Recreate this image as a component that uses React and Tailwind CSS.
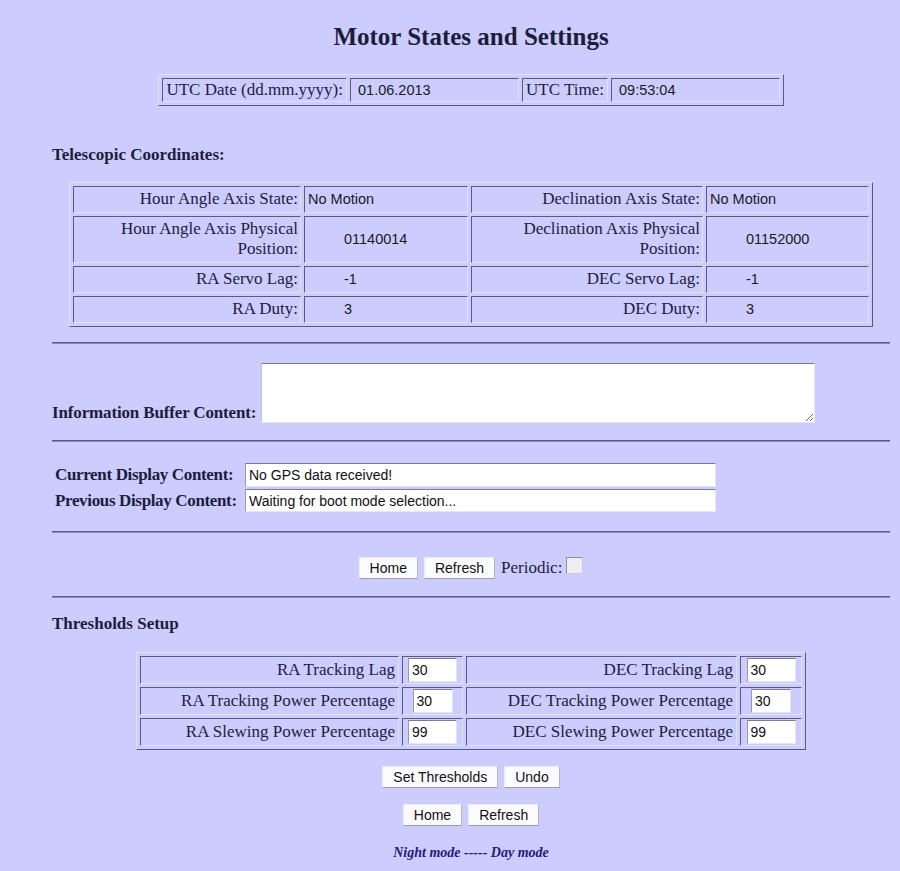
const CELL =
  "border border-t-[#5a5a7e] border-l-[#5a5a7e] border-b-[#e2e2fa] border-r-[#e2e2fa]";
const OUTER =
  "table-fixed border-separate border-spacing-[3px] border border-t-[#e2e2fa] border-l-[#e2e2fa] border-b-[#5a5a7e] border-r-[#5a5a7e]";
const SANS = "font-['Liberation_Sans',Arial,sans-serif] text-[14.5px] text-[#1a1a1a]";
const INPUT =
  "bg-white border border-t-[#7a7a90] border-l-[#9a9aae] border-b-[#e6e6ee] border-r-[#e6e6ee] font-['Liberation_Sans',Arial,sans-serif] text-[14px] text-[#111] pl-[3px] outline-none";

function Btn({ children }) {
  return (
    <button className="h-[22px] px-[10px] bg-[#fbfbfd] border border-t-[#ececf4] border-l-[#ececf4] border-b-[#9c9cb4] border-r-[#b4b4c8] font-['Liberation_Sans',Arial,sans-serif] text-[14px] leading-[20px] text-[#111]">
      {children}
    </button>
  );
}

function Hr() {
  return <div className="h-[2px] border-t border-t-[#5c5c80] border-b border-b-[#8c8cae]" />;
}

const coordRows = [
  { l1: ["Hour Angle Axis State:"], v1: "No Motion", l2: ["Declination Axis State:"], v2: "No Motion", plain: true },
  { l1: ["Hour Angle Axis Physical", "Position:"], v1: "01140014", l2: ["Declination Axis Physical", "Position:"], v2: "01152000" },
  { l1: ["RA Servo Lag:"], v1: "-1", l2: ["DEC Servo Lag:"], v2: "-1" },
  { l1: ["RA Duty:"], v1: "3", l2: ["DEC Duty:"], v2: "3" },
];

const thrRows = [
  { l1: "RA Tracking Lag", v1: "30", l2: "DEC Tracking Lag", v2: "30", narrow: false },
  { l1: "RA Tracking Power Percentage", v1: "30", l2: "DEC Tracking Power Percentage", v2: "30", narrow: true },
  { l1: "RA Slewing Power Percentage", v1: "99", l2: "DEC Slewing Power Percentage", v2: "99", narrow: false },
];

function Label({ lines }) {
  return lines.map((t, i) => (
    <span key={i}>
      {i > 0 && <br />}
      {t}
    </span>
  ));
}

export default function App() {
  return (
    <div className="min-h-[871px] bg-[#ccccff] text-[#1d1d3b] font-['Liberation_Serif','Times_New_Roman',serif] pl-[52px] pr-[10px] pb-[20px]">
      <div className="flex flex-col">
        <h1 className="mt-[22px] text-center text-[25px] leading-[29px] font-bold">Motor States and Settings</h1>

        <div className="mt-[23px] flex justify-center">
          <table className={`${OUTER} w-[626px]`}>
            <tbody>
              <tr>
                <td className={`${CELL} w-[185px] text-right pr-[3px] py-[1px] text-[17px] leading-[20px]`}>UTC Date (dd.mm.yyyy):</td>
                <td className={`${CELL} ${SANS} w-[169px] pl-[7px] py-[1px] leading-[20px]`}>01.06.2013</td>
                <td className={`${CELL} w-[86px] text-right pr-[3px] py-[1px] text-[17px] leading-[20px]`}>UTC Time:</td>
                <td className={`${CELL} ${SANS} w-[169px] pl-[7px] py-[1px] leading-[20px]`}>09:53:04</td>
              </tr>
            </tbody>
          </table>
        </div>

        <div className="mt-[39px] text-[17px] leading-[20px] font-bold">Telescopic Coordinates:</div>

        <div className="mt-[17px] pl-[17px]">
          <table className={`${OUTER} w-[804px]`}>
            <tbody>
              {coordRows.map((r, i) => (
                <tr key={i}>
                  <td className={`${CELL} w-[228px] text-right pr-[2px] pt-[2px] pb-[3px] text-[17px] leading-[20px]`}>
                    <Label lines={r.l1} />
                  </td>
                  <td className={`${CELL} ${SANS} w-[164px] ${r.plain ? "pl-[3px]" : "pl-[39px]"} pt-[2px] pb-[3px] leading-[20px]`}>{r.v1}</td>
                  <td className={`${CELL} w-[232px] text-right pr-[2px] pt-[2px] pb-[3px] text-[17px] leading-[20px]`}>
                    <Label lines={r.l2} />
                  </td>
                  <td className={`${CELL} ${SANS} w-[163px] ${r.plain ? "pl-[3px]" : "pl-[39px]"} pt-[2px] pb-[3px] leading-[20px]`}>{r.v2}</td>
                </tr>
              ))}
            </tbody>
          </table>
        </div>

        <div className="mt-[15px]"><Hr /></div>

        <div className="mt-[19px] flex items-end gap-[5px]">
          <span className="text-[17px] leading-[20px] font-bold tracking-[-0.15px] whitespace-nowrap">Information Buffer Content:</span>
          <textarea
            className="w-[554px] h-[60px] bg-white border border-t-[#7a7a90] border-l-[#c4c4d4] border-b-[#e6e6ee] border-r-[#e6e6ee] outline-none block"
            defaultValue=""
          />
        </div>

        <div className="mt-[17px]"><Hr /></div>

        <div className="mt-[21px] pl-[3px] grid grid-cols-[190px_471px] gap-y-[2px] items-center">
          <span className="text-[17px] leading-[20px] font-bold tracking-[-0.35px] whitespace-nowrap">Current Display Content:</span>
          <input className={`${INPUT} w-[471px] h-[24px]`} defaultValue="No GPS data received!" />
          <span className="text-[17px] leading-[20px] font-bold tracking-[-0.35px] whitespace-nowrap">Previous Display Content:</span>
          <input className={`${INPUT} w-[471px] h-[23px]`} defaultValue="Waiting for boot mode selection..." />
        </div>

        <div className="mt-[19px]"><Hr /></div>

        <div className="mt-[23px] h-[23px] flex justify-center items-center gap-[6px]">
          <Btn>Home</Btn>
          <Btn>Refresh</Btn>
          <span className="text-[17px] leading-[20px]">Periodic:</span>
          <input
            type="checkbox"
            className="appearance-none -ml-[2px] mb-[5px] w-[17px] h-[17px] bg-[#ededf2] border border-t-[#8e8ea2] border-l-[#8e8ea2] border-b-[#c8c8d4] border-r-[#c8c8d4]"
          />
        </div>

        <div className="mt-[17px]"><Hr /></div>

        <div className="mt-[16px] text-[17px] leading-[20px] font-bold">Thresholds Setup</div>

        <div className="mt-[18px] flex justify-center">
          <table className={`${OUTER} w-[670px]`}>
            <tbody>
              {thrRows.map((r, i) => (
                <tr key={i}>
                  <td className={`${CELL} w-[259px] text-right pr-[3px] py-[1px] text-[17px] leading-[24px]`}>{r.l1}</td>
                  <td className={`${CELL} w-[61px] py-[1px]`}>
                    <input className={`${INPUT} ${r.narrow ? "w-[40px]" : "w-[49px]"} h-[24px] block mx-auto`} defaultValue={r.v1} />
                  </td>
                  <td className={`${CELL} w-[271px] text-right pr-[3px] py-[1px] text-[17px] leading-[24px]`}>{r.l2}</td>
                  <td className={`${CELL} w-[62px] py-[1px]`}>
                    <input className={`${INPUT} ${r.narrow ? "w-[40px]" : "w-[49px]"} h-[24px] block mx-auto`} defaultValue={r.v2} />
                  </td>
                </tr>
              ))}
            </tbody>
          </table>
        </div>

        <div className="mt-[16px] flex justify-center gap-[6px]">
          <Btn>Set Thresholds</Btn>
          <Btn>Undo</Btn>
        </div>

        <div className="mt-[16px] flex justify-center gap-[6px]">
          <Btn>Home</Btn>
          <Btn>Refresh</Btn>
        </div>

        <div className="mt-[18px] text-center text-[14px] leading-[18px] font-bold italic text-[#1c1c7a]">Night mode ----- Day mode</div>
      </div>
    </div>
  );
}
